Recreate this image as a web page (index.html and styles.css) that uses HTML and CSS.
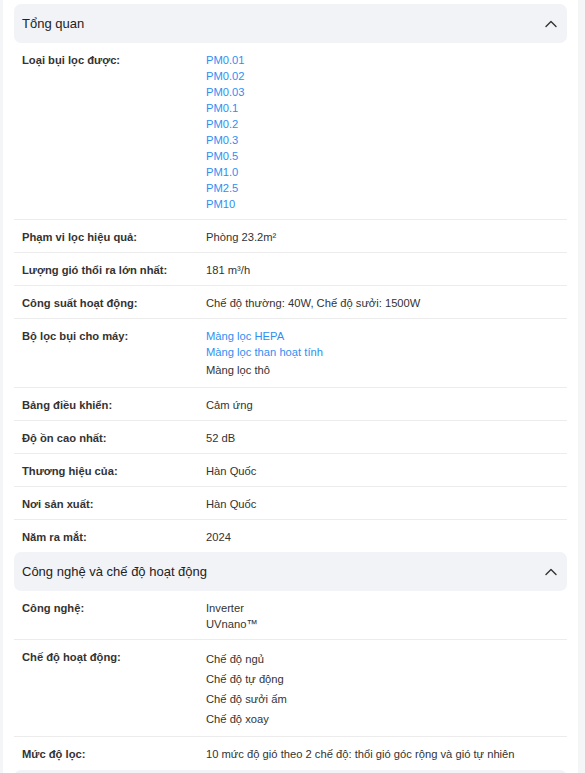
FILE: index.html
```html
<!DOCTYPE html>
<html lang="vi">
<head>
<meta charset="utf-8">
<link rel="stylesheet" href="styles.css">
</head>
<body>
<div class="page">
  <section class="group">
    <div class="group-head">
      <span class="group-title">Tổng quan</span>
      <svg class="chev" width="14" height="14" viewBox="0 0 14 14"><path d="M2 9.5 L7 4.5 L12 9.5" fill="none" stroke="#333" stroke-width="1.4" stroke-linecap="round" stroke-linejoin="round"/></svg>
    </div>
    <div class="row">
      <div class="label">Loại bụi lọc được:</div>
      <div class="value">
        <a class="link">PM0.01</a><a class="link">PM0.02</a><a class="link">PM0.03</a><a class="link">PM0.1</a><a class="link">PM0.2</a><a class="link">PM0.3</a><a class="link">PM0.5</a><a class="link">PM1.0</a><a class="link">PM2.5</a><a class="link">PM10</a>
      </div>
    </div>
    <div class="row"><div class="label">Phạm vi lọc hiệu quả:</div><div class="value">Phòng 23.2m²</div></div>
    <div class="row"><div class="label">Lượng gió thổi ra lớn nhất:</div><div class="value">181 m³/h</div></div>
    <div class="row"><div class="label">Công suất hoạt động:</div><div class="value">Chế độ thường: 40W, Chế độ sưởi: 1500W</div></div>
    <div class="row">
      <div class="label">Bộ lọc bụi cho máy:</div>
      <div class="value">
        <a class="link">Màng lọc HEPA</a><a class="link">Màng lọc than hoạt tính</a><span class="item">Màng lọc thô</span>
      </div>
    </div>
    <div class="row"><div class="label">Bảng điều khiển:</div><div class="value">Cảm ứng</div></div>
    <div class="row"><div class="label">Độ ồn cao nhất:</div><div class="value">52 dB</div></div>
    <div class="row"><div class="label">Thương hiệu của:</div><div class="value">Hàn Quốc</div></div>
    <div class="row"><div class="label">Nơi sản xuất:</div><div class="value">Hàn Quốc</div></div>
    <div class="row last"><div class="label">Năm ra mắt:</div><div class="value">2024</div></div>
  </section>
  <section class="group">
    <div class="group-head">
      <span class="group-title">Công nghệ và chế độ hoạt động</span>
      <svg class="chev" width="14" height="14" viewBox="0 0 14 14"><path d="M2 9.5 L7 4.5 L12 9.5" fill="none" stroke="#333" stroke-width="1.4" stroke-linecap="round" stroke-linejoin="round"/></svg>
    </div>
    <div class="row">
      <div class="label">Công nghệ:</div>
      <div class="value"><span class="line">Inverter</span><span class="line">UVnano™</span></div>
    </div>
    <div class="row">
      <div class="label">Chế độ hoạt động:</div>
      <div class="value"><span class="item">Chế độ ngủ</span><span class="item">Chế độ tự động</span><span class="item">Chế độ sưởi ấm</span><span class="item">Chế độ xoay</span></div>
    </div>
    <div class="row last"><div class="label">Mức độ lọc:</div><div class="value">10 mức độ gió theo 2 chế độ: thổi gió góc rộng và gió tự nhiên</div></div>
  </section>
  <div class="group-head stub"></div>
</div>
</body>
</html>
```
FILE: styles.css
```css
html, body {
  margin: 0;
  padding: 0;
}
body {
  background: #f4f5f7;
  font-family: "Liberation Sans", Arial, sans-serif;
  color: #333;
}
.page {
  margin-left: 3px;
  width: 553px;
  background: #fff;
  padding: 4px 11px 0 11px;
  height: 769px;
  overflow: hidden;
}
.group-head {
  height: 39px;
  background: #f2f3f7;
  border-radius: 7px;
  display: flex;
  align-items: center;
  justify-content: space-between;
  padding: 0 9px 0 8px;
}
.group-title {
  font-size: 13px;
  color: #222;
}
.chev {
  display: block;
}
.row {
  display: flex;
  padding: 9px 8px 7px 8px;
  border-bottom: 1px solid #ececec;
  font-size: 11.2px;
  line-height: 16px;
}
.row.last {
  border-bottom: none;
}
.label {
  width: 184px;
  flex: none;
  font-weight: bold;
  color: #333;
}
.value {
  flex: 1;
  color: #333;
}
.link {
  display: block;
  color: #2f8ff2;
  text-decoration: none;
}
.line {
  display: block;
}
.item {
  display: block;
  line-height: 20px;
}
.stub {
  margin-top: 1px;
}
```
